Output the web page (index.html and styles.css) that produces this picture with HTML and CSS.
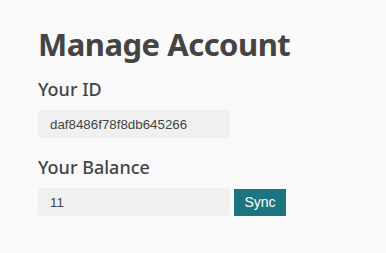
FILE: index.html
```html
<!DOCTYPE html>
<html lang="en">
<head>
  <meta charset="UTF-8" />
  <title>Manage Account</title>
  <link rel="stylesheet" href="styles.css">
</head>
<body>
  <div class="container">
    <h1>Manage Account</h1>
    <h3>Your ID</h3>
    <input class="field id-field" type="text" value="daf8486f78f8db645266" readonly>
    <h3>Your Balance</h3>
    <div class="row">
      <input class="field" type="text" value="11" readonly>
      <button class="sync">Sync</button>
    </div>
  </div>
</body>
</html>
```

FILE: styles.css
```css
body {
  margin: 0;
  background: #f9f9f9;
  color: #444;
  font-family: 'Noto Sans', sans-serif;
}

.container {
  padding: 22px 38px;
}

h1 {
  font-size: 31px;
  letter-spacing: -0.5px;
  font-weight: bold;
  margin: 0 0 10px;
  line-height: 44px;
}

h3 {
  font-size: 18px;
  font-weight: 500;
  margin: 0 0 8px;
  line-height: 26px;
}

.field {
  display: block;
  width: 192px;
  height: 28px;
  box-sizing: border-box;
  border: none;
  border-radius: 4px;
  background: #f0f0f0;
  padding: 0 12px;
  font-family: 'Liberation Sans', Arial, sans-serif;
  font-size: 13.33px;
  color: #444;
}

.id-field {
  margin: 6px 0 16px;
}

.row {
  display: flex;
  align-items: center;
  gap: 4px;
}

.sync {
  background: #1c7580;
  color: #fff;
  border: none;
  height: 27px;
  width: 52px;
  font-family: 'Liberation Sans', Arial, sans-serif;
  font-size: 14px;
  padding: 0;
}
```
